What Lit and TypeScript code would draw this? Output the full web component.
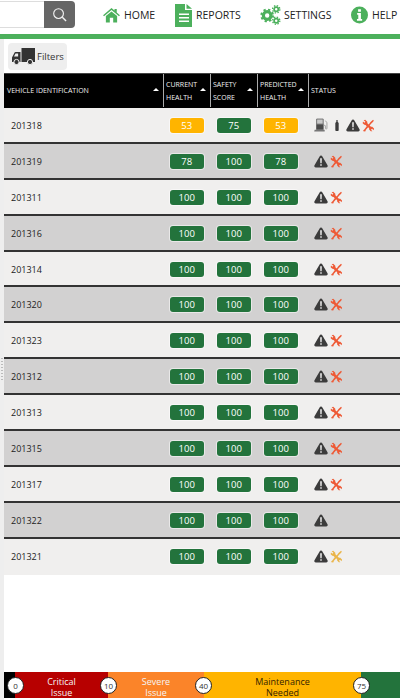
import { LitElement, html, css, svg } from "lit";
import { customElement } from "lit/decorators.js";

const rows: { id: string; c: number; s: number; p: number; icons: string[] }[] = [
  { id: "201318", c: 53, s: 75, p: 53, icons: ["fuel", "oil", "warn", "wrench"] },
  { id: "201319", c: 78, s: 100, p: 78, icons: ["warn", "wrench"] },
  { id: "201311", c: 100, s: 100, p: 100, icons: ["warn", "wrench"] },
  { id: "201316", c: 100, s: 100, p: 100, icons: ["warn", "wrench"] },
  { id: "201314", c: 100, s: 100, p: 100, icons: ["warn", "wrench"] },
  { id: "201320", c: 100, s: 100, p: 100, icons: ["warn", "wrench"] },
  { id: "201323", c: 100, s: 100, p: 100, icons: ["warn", "wrench"] },
  { id: "201312", c: 100, s: 100, p: 100, icons: ["warn", "wrench"] },
  { id: "201313", c: 100, s: 100, p: 100, icons: ["warn", "wrench"] },
  { id: "201315", c: 100, s: 100, p: 100, icons: ["warn", "wrench"] },
  { id: "201317", c: 100, s: 100, p: 100, icons: ["warn", "wrench"] },
  { id: "201322", c: 100, s: 100, p: 100, icons: ["warn"] },
  { id: "201321", c: 100, s: 100, p: 100, icons: ["warn", "wrench-y"] },
];

const wrenchPath = svg`<path d="M2 1.500 L4 1 L6.500 3.500 L6.600 5.200 L8.200 6.800 L10.500 3.800 L12.200 2 L13.600 1 L14.600 2 L13.400 3.600 L11.500 5.600 L9.400 8 L11 9.600 L12.600 9.600 L14.800 11.800 L14.300 13.800 L12.400 12 L11 13.200 L12.800 15 L10.800 15 L8.800 12.800 L8.800 11.400 L7.600 10 L4.600 13.400 L4.400 15 L2.200 15.400 L1.400 14 L2.800 13 L5.800 9 L4.400 7.400 L2.900 7.200 L0.800 5.200 L1.200 3 L3 4.600 L4.200 3.500 Z"/>`;

const icons: Record<string, unknown> = {
  warn: html`<svg class="warn" viewBox="0 0 15 14"><path fill="#3c3c3c" d="M7.500 .5c.7 0 1.100.4 1.500 1.100l5.500 9.400c.6 1.200 0 2.500-1.300 2.500H1.800C.5 13.500-.1 12.200.5 11L6 1.600C6.400.9 6.800.5 7.500.5z"/><path fill="#eee" d="M6.600 3.600h1.800l-.2 5.400H6.800zM6.700 10h1.600v1.700H6.700z"/></svg>`,
  wrench: html`<svg class="wrench" viewBox="0 0 16 16" fill="#ee5a36">${wrenchPath}</svg>`,
  "wrench-y": html`<svg class="wrench" viewBox="0 0 16 16" fill="#eab54a">${wrenchPath}</svg>`,
  fuel: html`<svg class="fuel" viewBox="0 0 16 16"><path fill="#4a4a4a" d="M2.500 7h8.500v6.500H2.500z"/><path fill="#c9c9c9" stroke="#666" stroke-width="1" d="M3 1.200h7.500V7H3z"/><path fill="#777" d="M.8 13.500h11.400v1.900H.2z"/><path fill="none" stroke="#999" stroke-width="1" d="M11 8.400h1.400c.5 0 .6.400.6.800v2.600c0 1.100 1.800 1.100 1.800 0V5.400L13 3"/></svg>`,
  oil: html`<svg class="oil" viewBox="0 0 5 14"><path fill="#3c3c3c" d="M1.700 0h1.600v2.400L4.600 4v8.800c0 .6-.4 1-1 1H1.400c-.6 0-1-.4-1-1V4l1.300-1.600z"/></svg>`,
};

function pillClass(v: number) {
  return v >= 75 ? "good" : "maint";
}

@customElement("app-root")
export class AppRoot extends LitElement {
  static styles = css`
    :host {
      display: block;
      width: 400px;
      height: 700px;
      background: #fff;
      font-family: "Open Sans", "Liberation Sans", sans-serif;
      overflow: hidden;
    }
    .page { display: flex; flex-direction: column; height: 700px; }
    .top {
      height: 34px;
      flex: none;
      display: flex;
      align-items: flex-start;
      border-bottom: 5px solid #4cb05c;
    }
    .search {
      width: 75px;
      height: 27px;
      margin-top: 1px;
      flex: none;
      display: flex;
      justify-content: flex-end;
      box-sizing: border-box;
    }
    .search-input {
      flex: 1;
      background: #fff;
      border-top: 1px solid #ddd;
      border-bottom: 1px solid #ddd;
    }
    .search-btn {
      width: 31px;
      background: #666;
      border-radius: 0 4px 4px 0;
      display: flex;
      align-items: center;
      justify-content: center;
    }
    .search-btn svg { width: 15px; height: 15px; }
    nav {
      display: flex;
      align-items: center;
      margin-left: 28px;
      height: 30px;
    }
    .nav-item {
      display: flex;
      align-items: center;
      gap: 4px;
      font-size: 10.5px;
      color: #222;
      white-space: nowrap;
    }
    .nav-item svg { display: block; flex: none; }
    .home { width: 72px; }
    .home svg { width: 17px; height: 15px; }
    .reports { width: 85px; }
    .reports svg { width: 17px; height: 23px; }
    .settings { width: 91px; gap: 3px; }
    .settings svg { width: 21px; height: 20px; }
    .help svg { width: 17px; height: 18px; }

    .body { flex: 1; display: flex; min-height: 0; }
    .rail { width: 4px; flex: none; background: #eee; }
    .dots {
      width: 2px;
      height: 22px;
      margin: 319px 0 0 1px;
      background: repeating-linear-gradient(to bottom, #bbb 0 1px, transparent 1px 3px);
    }
    .main { flex: 1; display: flex; flex-direction: column; min-width: 0; }
    .filters {
      flex: none;
      margin: 4px 0 0 4px;
      width: 59px;
      height: 27px;
      box-sizing: border-box;
      border-radius: 4px;
      background: #eee;
      display: flex;
      align-items: center;
      padding-left: 4px;
      gap: 1px;
      font-size: 9.5px;
      color: #333;
    }
    .filters svg { width: 24px; height: 17px; flex: none; }

    .grid { margin-top: 3px; flex: none; }
    .head, .row {
      display: grid;
      grid-template-columns: 160px 47px 47px 51px 1fr;
    }
    .head {
      height: 35px;
      background: #000;
      color: #f2f2f2;
      font-size: 7px;
      border-top: 1px solid #444;
      box-sizing: border-box;
      padding-bottom: 1px;
    }
    .th {
      position: relative;
      display: flex;
      align-items: center;
      padding-left: 2px;
      line-height: 13px;
      border-right: 1px solid #aaa;
      white-space: pre-line;
    }
    .th.first { padding-left: 3px; }
    .th:last-child { border-right: 0; }
    .caret {
      position: absolute;
      right: 4px;
      top: 14px;
      width: 0;
      height: 0;
      border-left: 3px solid transparent;
      border-right: 3px solid transparent;
      border-bottom: 3px solid #fff;
    }
    .row {
      height: 35.9px;
      box-sizing: border-box;
      padding-top: 1px;
      border-bottom: 2px solid #333;
      align-items: center;
      font-size: 9px;
      color: #222;
      background: #f0efee;
    }
    .row:nth-child(even) { background: #d2d1d1; }
    .row:last-child { border-bottom: 0; padding-bottom: 2px; }
    .id { padding-left: 7px; }
    .cell { display: flex; padding-left: 5.5px; }
    .pill {
      width: 34.500px;
      height: 15px;
      border-radius: 3px;
      font-size: 9.500px;
      line-height: 15px;
      text-align: center;
      color: #fff;
      box-shadow: 0 0 0 1px rgba(255,255,255,.5);
    }
    .good { background: #23733c; }
    .maint { background: #ffb400; }
    .status { display: flex; align-items: center; padding-left: 5px; gap: 2px; }
    .status svg { display: block; flex: none; }
    .warn { width: 14px; height: 13px; }
    .wrench { width: 13px; height: 13px; }
    .fuel { width: 14px; height: 14px; margin-right: 5px; }
    .oil { width: 4px; height: 13px; margin-right: 5px; }

    .spacer { flex: 1; }
    .legend {
      flex: none;
      margin-bottom: 2px;
      height: 26px;
      display: grid;
      grid-template-columns: 11px 93px 96px 157px 1fr;
      font-size: 9px;
      line-height: 11px;
      text-align: center;
      position: relative;
    }
    .seg { padding-top: 3.500px; white-space: pre-line; }
    .s0 { background: #000; }
    .s1 { background: #b70000; color: #f5f5f5; }
    .s2 { background: #fb8429; color: #f5f5f5; }
    .s3 { background: #ffb400; color: #332200; }
    .s4 { background: #23733c; }
    .mark {
      position: absolute;
      top: 5px;
      width: 15px;
      height: 15px;
      border-radius: 50%;
      background: #fff;
      border: 1px solid #222;
      color: #333;
      font-size: 8px;
      line-height: 15px;
      text-align: center;
    }
  `;

  render() {
    return html`<div class="page">
      <div class="top">
        <div class="search">
          <div class="search-input"></div>
          <div class="search-btn">
            <svg viewBox="0 0 16 16" fill="none" stroke="#f4f4f4" stroke-width="1.200"><circle cx="7" cy="7" r="5.200"/><path d="M11 11l4 4" stroke-width="1.500"/></svg>
          </div>
        </div>
        <nav>
          <div class="nav-item home">
            <svg viewBox="0 0 18 16"><path fill="#4cb05c" d="M9 0l3.200 2.700V1h2.400v3.800L18 7.700l-1 1.200L9 2.200 1 8.900 0 7.700z"/><path fill="#4cb05c" d="M9 3.600l6 5V15.500H10.800V10.500H7.200V15.500H3V8.600z"/></svg>
            HOME
          </div>
          <div class="nav-item reports">
            <svg viewBox="0 0 17 23"><path fill="#4cb05c" d="M0 0h10v6h7v17H0z"/><path fill="#4cb05c" d="M11.500 0L17 4.800h-5.500z"/><path fill="#fff" d="M4 9.500h10v1.500H4zM4 13h10v1.500H4zM4 16.500h10v1.500H4z"/></svg>
            REPORTS
          </div>
          <div class="nav-item settings">
            <svg viewBox="0 0 22 21"><g fill="none" stroke="#4cb05c"><circle cx="7.500" cy="11" r="4" stroke-width="3.400"/><circle cx="7.500" cy="11" r="6.200" stroke-width="2" stroke-dasharray="2.400 2.500"/><circle cx="17" cy="4.500" r="2.200" stroke-width="1.800"/><circle cx="17" cy="4.500" r="3.800" stroke-width="1.400" stroke-dasharray="1.500 1.500"/><circle cx="17" cy="16.500" r="2.200" stroke-width="1.800"/><circle cx="17" cy="16.500" r="3.800" stroke-width="1.400" stroke-dasharray="1.500 1.500"/></g></svg>
            SETTINGS
          </div>
          <div class="nav-item help">
            <svg viewBox="0 0 18 18"><circle cx="9" cy="9" r="9" fill="#4cb05c"/><path fill="#fff" d="M7.500 2.800h3v2.700h-3zM6.500 7h4v6.300h1.300V15H6.300v-1.700h1.400V8.700H6.500z"/></svg>
            HELP
          </div>
        </nav>
      </div>
      <div class="body">
        <div class="rail"><div class="dots"></div></div>
        <div class="main">
          <div class="filters">
            <svg viewBox="0 0 24 17"><path fill="#333" d="M9.500 0H23v14H9.500z"/><path fill="#333" d="M8.500 4v10H0V9.500l2.200-4.300C2.500 4.500 3 4 3.700 4z"/><path fill="#eee" d="M3.500 5.500h2.600V8.500H2z"/><circle cx="4.500" cy="14" r="2.600" fill="#333" stroke="#eee"/><circle cx="18" cy="14" r="2.600" fill="#333" stroke="#eee"/></svg>
            Filters
          </div>
          <div class="grid">
            <div class="head">
              <div class="th first">VEHICLE IDENTIFICATION<i class="caret"></i></div>
              <div class="th">CURRENT
HEALTH<i class="caret"></i></div>
              <div class="th">SAFETY
SCORE<i class="caret"></i></div>
              <div class="th">PREDICTED
HEALTH<i class="caret"></i></div>
              <div class="th">STATUS</div>
            </div>
            <div class="rows">
              ${rows.map(
                (r) => html`<div class="row">
                  <div class="id">${r.id}</div>
                  <div class="cell"><div class="pill ${pillClass(r.c)}">${r.c}</div></div>
                  <div class="cell"><div class="pill ${pillClass(r.s)}">${r.s}</div></div>
                  <div class="cell"><div class="pill ${pillClass(r.p)}">${r.p}</div></div>
                  <div class="status">${r.icons.map((i) => icons[i])}</div>
                </div>`
              )}
            </div>
          </div>
          <div class="spacer"></div>
          <div class="legend">
            <div class="seg s0"></div>
            <div class="seg s1">Critical
Issue</div>
            <div class="seg s2">Severe
Issue</div>
            <div class="seg s3">Maintenance
Needed</div>
            <div class="seg s4"></div>
            <div class="mark" style="left:3px">0</div>
            <div class="mark" style="left:96px">10</div>
            <div class="mark" style="left:191px">40</div>
            <div class="mark" style="left:349px">75</div>
          </div>
        </div>
      </div>
    </div>`;
  }
}
